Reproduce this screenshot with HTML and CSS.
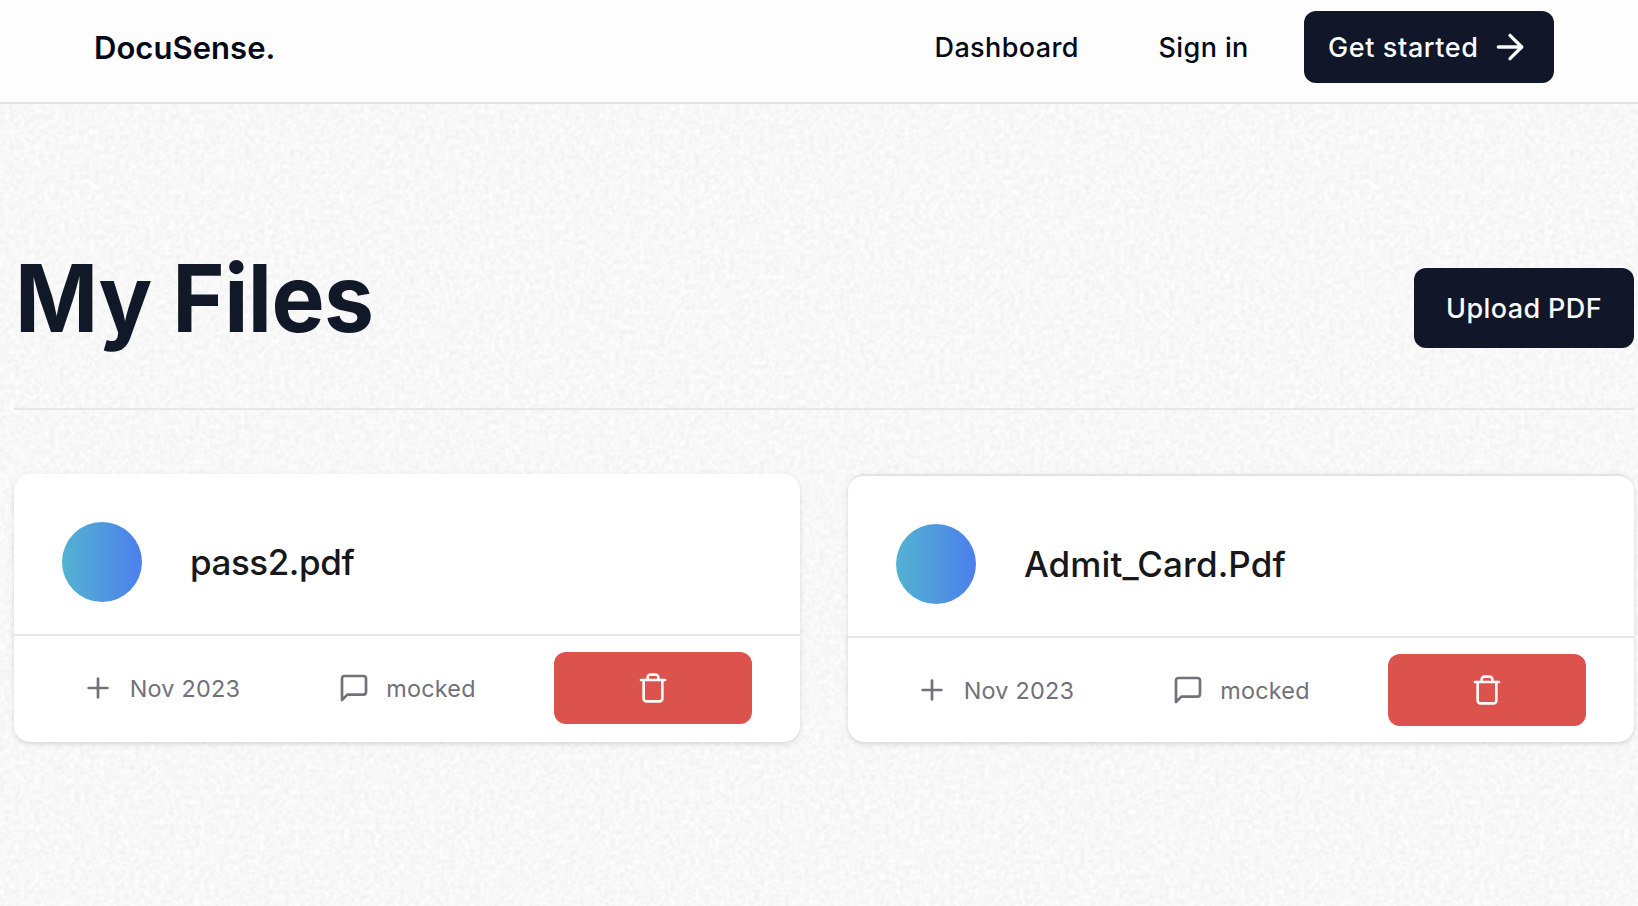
FILE: index.html
```html
<!DOCTYPE html>
<html lang="en">
<head>
<meta charset="utf-8">
<title>DocuSense</title>
<link rel="stylesheet" href="styles.css">
</head>
<body>
<svg class="grain" aria-hidden="true">
  <filter id="grain" x="0" y="0" width="100%" height="100%" color-interpolation-filters="sRGB">
    <feTurbulence type="fractalNoise" baseFrequency="0.2" numOctaves="2" seed="4"/>
    <feColorMatrix values="0.075 0.005 0 0 0.93  0.075 0.01 0 0 0.929  0.075 0 0.005 0 0.93  0 0 0 0 1"/>
  </filter>
  <rect width="100%" height="100%" filter="url(#grain)"/>
</svg>
<nav class="nav">
  <a class="logo">DocuSense.</a>
  <div class="links">
    <a class="link dashboard">Dashboard</a>
    <a class="link signin">Sign in</a>
    <a class="btn get-started"><span>Get started</span>
      <svg class="icon arrow" viewBox="0 0 24 24"><path d="M5 12h14"/><path d="m12 5 7 7-7 7"/></svg>
    </a>
  </div>
</nav>
<main class="main">
  <header class="heading">
    <h1 class="title">My Files</h1>
    <a class="btn upload"><span>Upload PDF</span></a>
  </header>
  <ul class="files">
    <li class="card">
      <div class="card-top"><div class="avatar"></div><h3 class="name name-pass">pass2.pdf</h3></div>
      <div class="card-foot">
        <div class="meta"><svg class="icon" viewBox="0 0 24 24"><path d="M5 12h14"/><path d="M12 5v14"/></svg><span class="date">Nov 2023</span></div>
        <div class="meta"><svg class="icon" viewBox="0 0 24 24"><path d="M21 15a2 2 0 0 1-2 2H7l-4 4V5a2 2 0 0 1 2-2h14a2 2 0 0 1 2 2z"/></svg><span class="mocked">mocked</span></div>
        <a class="delete"><svg class="icon" viewBox="0 0 24 24"><path d="M3 6h18"/><path d="M19 6v14c0 1-1 2-2 2H7c-1 0-2-1-2-2V6"/><path d="M8 6V4c0-1 1-2 2-2h4c1 0 2 1 2 2v2"/></svg></a>
      </div>
    </li>
    <li class="card card-ruled">
      <div class="card-top"><div class="avatar"></div><h3 class="name name-admit">Admit_Card.Pdf</h3></div>
      <div class="card-foot">
        <div class="meta"><svg class="icon" viewBox="0 0 24 24"><path d="M5 12h14"/><path d="M12 5v14"/></svg><span class="date">Nov 2023</span></div>
        <div class="meta"><svg class="icon" viewBox="0 0 24 24"><path d="M21 15a2 2 0 0 1-2 2H7l-4 4V5a2 2 0 0 1 2-2h14a2 2 0 0 1 2 2z"/></svg><span class="mocked">mocked</span></div>
        <a class="delete"><svg class="icon" viewBox="0 0 24 24"><path d="M3 6h18"/><path d="M19 6v14c0 1-1 2-2 2H7c-1 0-2-1-2-2V6"/><path d="M8 6V4c0-1 1-2 2-2h4c1 0 2 1 2 2v2"/></svg></a>
      </div>
    </li>
  </ul>
</main>
</body>
</html>
```
FILE: styles.css
```css
* { box-sizing: border-box; margin: 0; padding: 0; }
body {
  height: 906px;
  overflow: hidden;
  background: #f8f8f8;
  color: #020817;
  font-family: Inter, "Liberation Sans", sans-serif;
  -webkit-font-smoothing: antialiased;
}
.grain { position: absolute; inset: 0; width: 100%; height: 906px; z-index: -1; }
.icon {
  width: 32px; height: 32px; flex: none; display: block;
  fill: none; stroke: currentColor; stroke-width: 2;
  stroke-linecap: round; stroke-linejoin: round;
}
.nav {
  height: 104px;
  padding: 11px 84px 0 94px;
  display: flex; justify-content: space-between; align-items: flex-start;
  background: #fdfdfd;
  border-bottom: 2px solid #e4e4e7;
}
.logo { font-size: 31px; font-weight: 600; line-height: 74px; letter-spacing: 0.05px; }
.links { display: flex; align-items: flex-start; }
.link { font-size: 27px; font-weight: 500; line-height: 73px; letter-spacing: 0.4px; white-space: nowrap; }
.dashboard { width: 224px; }
.signin { width: 145.5px; }
.btn {
  display: flex; align-items: center;
  background: #111628; color: #f8fafc;
  border-radius: 12px;
  font-size: 27px; font-weight: 450; letter-spacing: 0.6px; white-space: nowrap;
}
.get-started { width: 250px; height: 72px; padding: 0 24px; justify-content: space-between; }
.arrow { width: 40px; height: 40px; }
.main { padding: 144px 4px 0 14px; }
.heading {
  height: 162px;
  display: flex; justify-content: space-between; align-items: flex-start;
  border-bottom: 2px solid #e5e7eb;
}
.title {
  margin-left: 1px;
  font-size: 94px; font-weight: 700; line-height: 100px; color: #111827;
  letter-spacing: -0.6px;
  transform: scaleX(0.95); transform-origin: left;
}
.upload { width: 220px; height: 80px; margin-top: 20px; justify-content: center; letter-spacing: 0.4px; }
.files { list-style: none; margin-top: 64px; display: grid; grid-template-columns: 1fr 1fr; gap: 48px; }
.card {
  background: #fff; border-radius: 16px;
  box-shadow: 0 2px 6px rgba(0,0,0,.1), 0 2px 4px -2px rgba(0,0,0,.1);
}
.card-ruled { border-top: 2px solid #e4e4e7; }
.card-top {
  height: 162px; padding: 48px 48px 0;
  display: flex; gap: 48px;
  border-bottom: 2px solid #e5e7eb;
}
.avatar { width: 80px; height: 80px; border-radius: 50%; background: linear-gradient(to right, #53b3d0, #4c7fee); }
.name { font-size: 35px; font-weight: 500; line-height: 80px; color: #18181b; }
.name-pass { letter-spacing: -0.45px; }
.name-admit { letter-spacing: 0.08px; }
.card-foot {
  padding: 16px 48px;
  display: grid; grid-template-columns: repeat(3, 1fr); gap: 48px;
  color: #71717a; font-size: 23.4px; letter-spacing: 0.25px;
}
.meta { display: flex; align-items: center; justify-content: center; gap: 16px; white-space: nowrap; }
.delete {
  height: 72px; border-radius: 12px; background: #dc524c; color: #fafafa;
  display: flex; align-items: center; justify-content: center;
}
```
